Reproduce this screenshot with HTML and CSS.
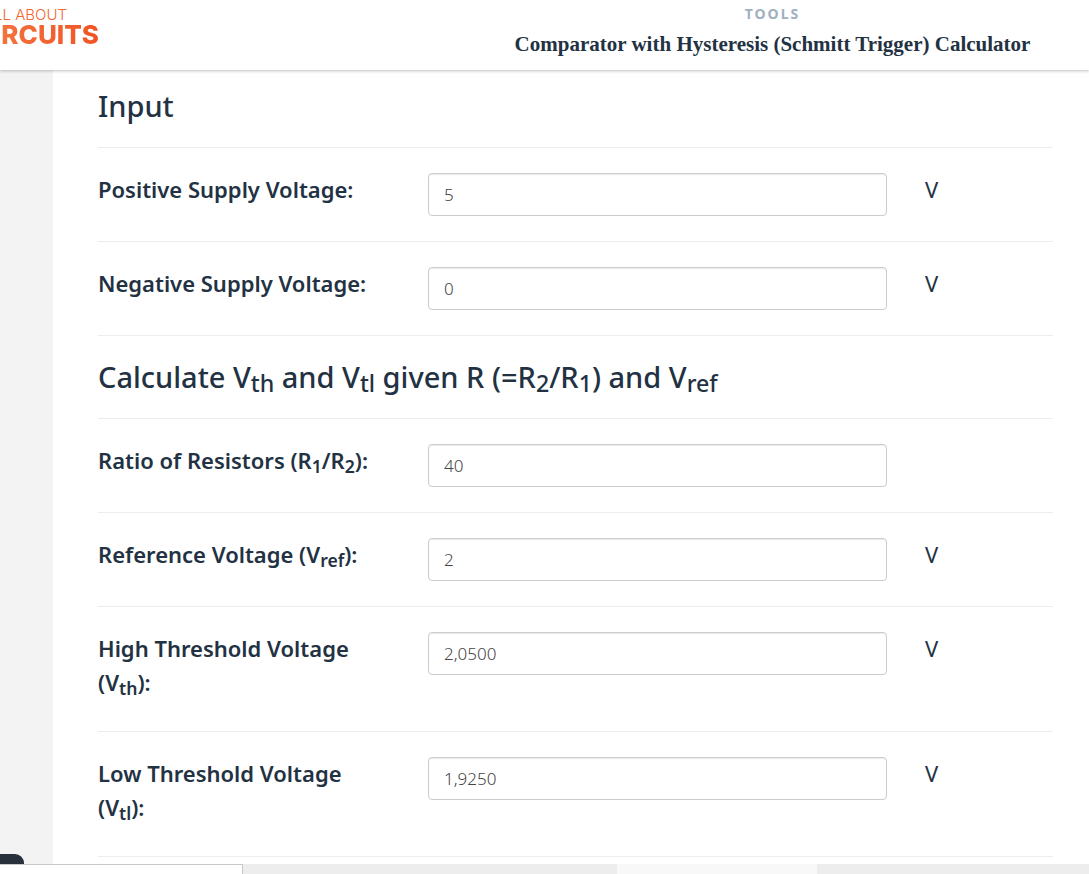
FILE: index.html
```html
<!DOCTYPE html>
<html lang="en">

<head>
    <meta charset="UTF-8">
    <meta name="viewport" content="width=device-width, initial-scale=1.0">
    <title>Comparator with Hysteresis (Schmitt Trigger) Calculator</title>
    <link rel="stylesheet" href="styles.css">
</head>

<body>
    <header class="header">
        <a class="logo" href="#">
            <span class="logo-top">ALL ABOUT</span>
            <span class="logo-bottom">CIRCUITS</span>
        </a>
        <div class="page-title">
            <p class="category">TOOLS</p>
            <h1 class="title">Comparator with Hysteresis (Schmitt Trigger) Calculator</h1>
        </div>
    </header>

    <main class="main">
        <form class="calculator">
            <h2 class="section">Input</h2>
            <div class="row">
                <label class="label" for="vcc">Positive Supply Voltage:</label>
                <input type="text" class="field" id="vcc" value="5">
                <span class="unit">V</span>
            </div>
            <div class="row">
                <label class="label" for="vee">Negative Supply Voltage:</label>
                <input type="text" class="field" id="vee" value="0">
                <span class="unit">V</span>
            </div>

            <h2 class="section">Calculate V<sub>th</sub> and V<sub>tl</sub> given R (=R<sub>2</sub>/R<sub>1</sub>) and V<sub>ref</sub></h2>
            <div class="row">
                <label class="label" for="ratio">Ratio of Resistors (R<sub>1</sub>/R<sub>2</sub>):</label>
                <input type="text" class="field" id="ratio" value="40">
            </div>
            <div class="row">
                <label class="label" for="vref">Reference Voltage (V<sub>ref</sub>):</label>
                <input type="text" class="field" id="vref" value="2">
                <span class="unit">V</span>
            </div>
            <div class="row">
                <label class="label" for="vth">High Threshold Voltage (V<sub>th</sub>):</label>
                <input type="text" class="field" id="vth" value="2,0500">
                <span class="unit">V</span>
            </div>
            <div class="row">
                <label class="label" for="vtl">Low Threshold Voltage (V<sub>tl</sub>):</label>
                <input type="text" class="field" id="vtl" value="1,9250">
                <span class="unit">V</span>
            </div>
        </form>
        <div class="side-tab"></div>
    </main>

    <footer class="bottom-bar">
        <div class="status"></div>
        <div class="banner"></div>
    </footer>
</body>

</html>
```

FILE: styles.css
```css
* {
    box-sizing: border-box;
}

body {
    display: flex;
    flex-direction: column;
    height: 100vh;
    margin: 0;
    overflow: hidden;
    background-color: #f3f3f3;
    color: #233243;
    font-family: "Noto Sans", "Open Sans", sans-serif;
}

.header {
    display: flex;
    flex-shrink: 0;
    height: 70px;
    background-color: #fff;
    box-shadow: 0 1px 3px rgba(0, 0, 0, 0.25);
    z-index: 1;
}

/* the logo runs off the left edge */
.logo {
    display: flex;
    flex-direction: column;
    align-items: flex-end;
    width: 99px;
    padding-top: 7px;
    color: #f26531;
    text-decoration: none;
    white-space: nowrap;
    font-family: Inter, sans-serif;
}

.logo-top {
    padding-right: 32px;
    font-size: 15px;
    font-weight: 300;
    line-height: 16px;
}

.logo-bottom {
    background: linear-gradient(90deg, #f47a45, #f05423);
    background-clip: text;
    color: transparent;
    font-size: 26px;
    font-weight: 800;
    line-height: 24px;
}

.page-title {
    flex: 1;
    padding: 4px 0 0 357px;
    text-align: center;
}

.category {
    margin: 0;
    color: #9fb0c0;
    font-size: 14px;
    font-weight: 700;
    letter-spacing: 2px;
    line-height: 20px;
}

.title {
    margin: 8px 0 0;
    font-family: "Liberation Serif", serif;
    font-size: 21px;
    font-weight: 700;
    line-height: 24px;
    white-space: nowrap;
}

.main {
    position: relative;
    flex: 1;
    min-height: 0;
    padding-left: 53px;
    overflow: hidden;
}

.calculator {
    min-height: 100%;
    padding: 0 36px 0 45px;
    background-color: #fff;
}

.section {
    margin: 0;
    padding: 16px 0 21px;
    border-bottom: 1px solid #ededed;
    font-size: 29px;
    font-weight: 500;
    line-height: 40px;
}

.row + .section {
    padding: 21px 0 21px;
}

sub {
    position: relative;
    bottom: -4px;
    font-size: 80%;
    line-height: 1;
    vertical-align: baseline;
}

.row {
    display: grid;
    grid-template-columns: 292px 1fr 128px;
    column-gap: 38px;
    align-items: start;
    padding: 24px 0 25px;
    border-bottom: 1px solid #ededed;
}

.label,
.unit {
    font-size: 22px;
    line-height: 34px;
}

.label {
    padding-bottom: 7px;
    font-weight: 600;
}

.field {
    width: 100%;
    height: 43px;
    margin: 1px 0 0;
    padding: 0 15px;
    border: 1px solid #ccc;
    border-radius: 4px;
    box-shadow: inset 0 1px 1px rgba(0, 0, 0, 0.08);
    color: #444;
    font-family: inherit;
    font-size: 17px;
    font-weight: 300;
}

.side-tab {
    position: absolute;
    left: 0;
    bottom: 0;
    width: 24px;
    height: 10px;
    border-top-right-radius: 9px;
    background-color: #28303c;
}

.bottom-bar {
    display: flex;
    flex-shrink: 0;
    height: 10px;
    background-color: #ededed;
}

.status {
    width: 243px;
    border: solid #c8c8c8;
    border-width: 1px 1px 0 0;
    background-color: #fff;
}

.banner {
    width: 200px;
    margin-left: 374px;
    background-color: #f8f8f8;
}
```
